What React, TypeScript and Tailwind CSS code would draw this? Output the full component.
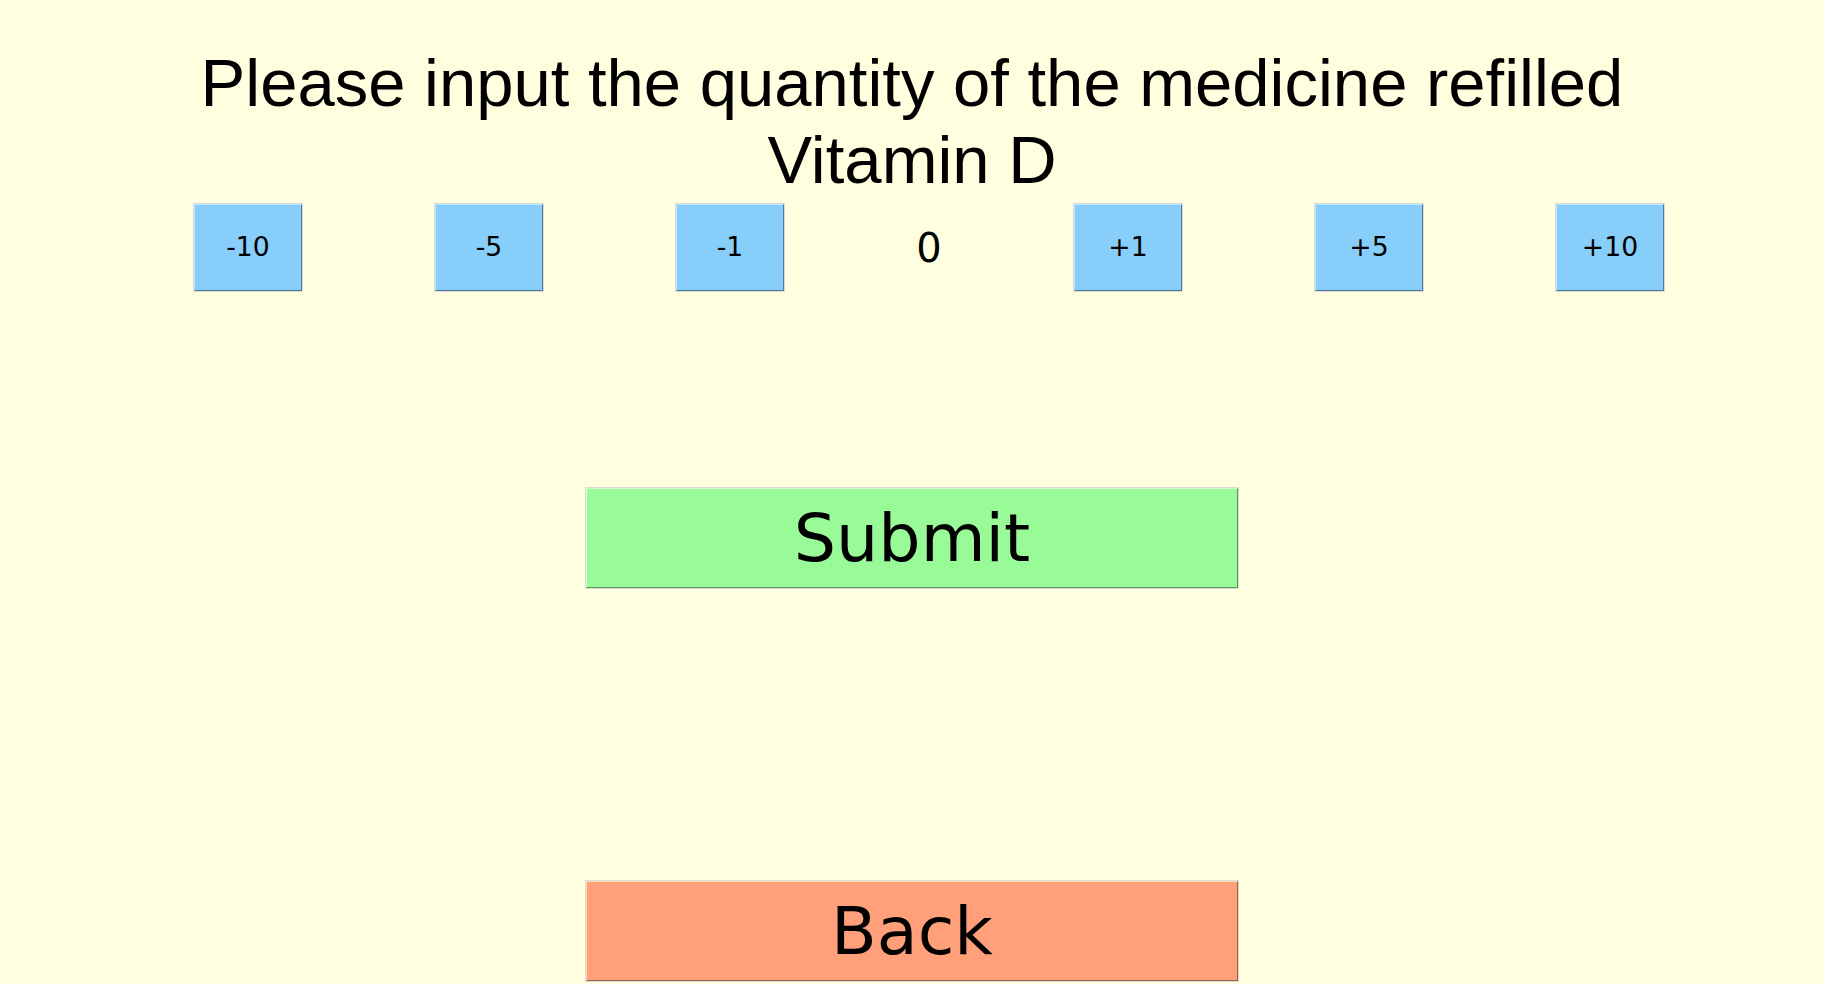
import React from "react";

const steps = [-10, -5, -1];
const stepsUp = [1, 5, 10];

function StepButton({ label, onClick }: { label: string; onClick: () => void }) {
    return (
        <button
            onClick={onClick}
            className="w-[110px] h-[89px] border border-[#d9d9d9] p-0 cursor-pointer"
        >
            <div className="w-full h-full flex items-center justify-center bg-[#87cefa] border border-t-[#bde6ff] border-l-[#bde6ff] border-b-[#517c96] border-r-[#517c96] text-[26.67px] text-black leading-none">
                {label}
            </div>
        </button>
    );
}

export default function App() {
    const [qty, setQty] = React.useState(0);

    return (
        <div className="w-full h-[984px] bg-[#ffffe0] overflow-hidden">
            {/* Title */}
            <div className="pt-[44px] text-center text-black text-[67px] leading-[77px] font-['Liberation_Sans',Arial,sans-serif]">
                <div>Please input the quantity of the medicine refilled</div>
                <div>Vitamin D</div>
            </div>

            {/* Quantity stepper row */}
            <div className="mt-[5px] pl-[193px] flex items-center gap-[131px] font-['DejaVu_Sans',sans-serif]">
                {steps.map((s) => (
                    <StepButton key={s} label={`${s}`} onClick={() => setQty(qty + s)} />
                ))}
                <div className="w-[26px] flex justify-center text-[40px] leading-none text-black">
                    {qty}
                </div>
                {stepsUp.map((s) => (
                    <StepButton key={s} label={`+${s}`} onClick={() => setQty(qty + s)} />
                ))}
            </div>

            {/* Submit */}
            <button className="block mx-auto mt-[195px] w-[654px] h-[102px] border border-[#d9d9d9] p-0 cursor-pointer font-['DejaVu_Sans',sans-serif]">
                <div className="w-full h-full flex items-center justify-center bg-[#98fb98] border border-t-[#d5ffd5] border-l-[#d5ffd5] border-b-[#5b965b] border-r-[#5b965b] text-[66.67px] leading-none text-black">
                    Submit
                </div>
            </button>

            {/* Back */}
            <button className="block mx-auto mt-[291px] w-[654px] h-[102px] border border-[#d9d9d9] p-0 cursor-pointer font-['DejaVu_Sans',sans-serif]">
                <div className="w-full h-full flex items-center justify-center bg-[#ffa07a] border border-t-[#ffe0ab] border-l-[#ffe0ab] border-b-[#996049] border-r-[#996049] text-[66.67px] leading-none text-black">
                    Back
                </div>
            </button>
        </div>
    );
}
